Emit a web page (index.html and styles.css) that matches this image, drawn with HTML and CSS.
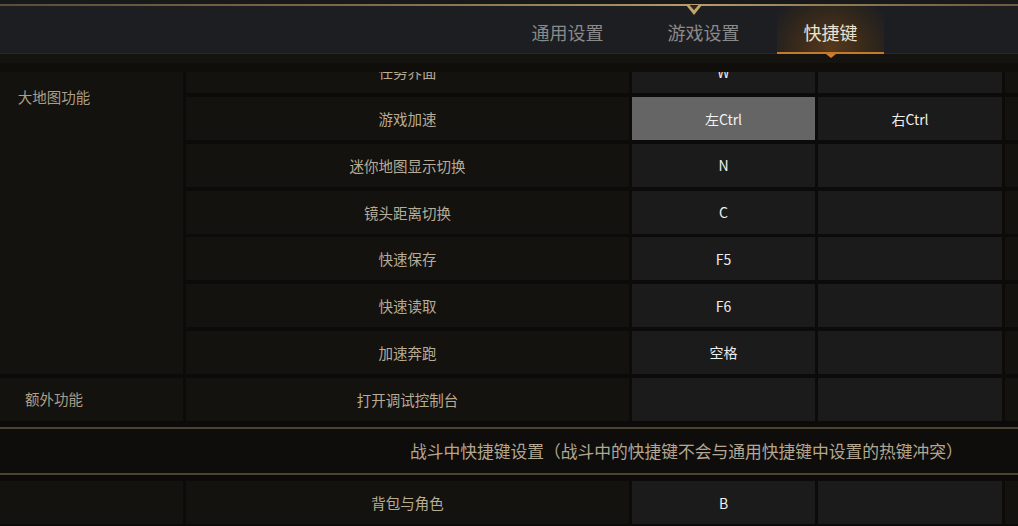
FILE: index.html
```html
<!DOCTYPE html>
<html lang="zh-CN">
<head>
<meta charset="utf-8">
<title>快捷键设置</title>
<link rel="stylesheet" href="styles.css">
</head>
<body>
<div class="top-strip"></div>
<div class="gold-line">
  <svg class="notch" width="16" height="11" viewBox="0 0 16 11">
    <polygon points="0,0 16,0 8,10" fill="#c2a46c"/>
    <polygon points="3.5,0 12.5,0 8,5.2" fill="#2e271d"/>
  </svg>
</div>
<header class="tabs-bar">
  <nav class="tabs">
    <div class="tab">通用设置</div>
    <div class="tab">游戏设置</div>
    <div class="tab active">快捷键</div>
  </nav>
</header>
<div class="sub-band-a"></div>
<div class="sub-band-b"></div>
<main class="viewport">
  <div class="content">
    <section class="group">
      <div class="cat cat-top span-7"><span class="cat-label">大地图功能</span></div>
      <div class="act">任务界面</div><div class="key">W</div><div class="key"></div><div class="extra"></div>
      <div class="act">游戏加速</div><div class="key key-hl">左Ctrl</div><div class="key">右Ctrl</div><div class="extra"></div>
      <div class="act">迷你地图显示切换</div><div class="key">N</div><div class="key"></div><div class="extra"></div>
      <div class="act">镜头距离切换</div><div class="key">C</div><div class="key"></div><div class="extra"></div>
      <div class="act">快速保存</div><div class="key">F5</div><div class="key"></div><div class="extra"></div>
      <div class="act">快速读取</div><div class="key">F6</div><div class="key"></div><div class="extra"></div>
      <div class="act">加速奔跑</div><div class="key">空格</div><div class="key"></div><div class="extra"></div>
    </section>
    <section class="group">
      <div class="cat cat-mid"><span class="cat-label">额外功能</span></div>
      <div class="act">打开调试控制台</div><div class="key"></div><div class="key"></div><div class="extra"></div>
    </section>
    <div class="section-band">战斗中快捷键设置（战斗中的快捷键不会与通用快捷键中设置的热键冲突）</div>
    <section class="group">
      <div class="cat cat-mid"></div>
      <div class="act">背包与角色</div><div class="key">B</div><div class="key"></div><div class="extra"></div>
    </section>
  </div>
</main>
</body>
</html>
```

FILE: styles.css
```css
* { box-sizing: border-box; }

html, body {
  margin: 0;
  padding: 0;
}

body {
  width: 1018px;
  height: 526px;
  overflow: hidden;
  background: #0c0b09;
  font-family: "Noto Sans CJK SC", "Noto Sans", sans-serif;
}

.top-strip {
  height: 4px;
  background: #18191b;
}

.gold-line {
  position: relative;
  height: 2px;
  background: linear-gradient(90deg, #5a4d39 0%, #7d6a4c 35%, #a48a5e 60%, #b89c6b 68%, #917a55 82%, #6a5a42 100%);
  z-index: 2;
}

.notch {
  position: absolute;
  left: 686px;
  top: 1px;
  display: block;
}

.tabs-bar {
  height: 48px;
  background: #1d1e22;
  border-bottom: 1px solid #2b2925;
  display: flex;
  justify-content: flex-end;
  padding-right: 134px;
}

.tabs {
  display: flex;
  gap: 11px;
  height: 100%;
}

.tab {
  position: relative;
  display: flex;
  align-items: center;
  padding: 5px 26.5px 0;
  font-size: 18px;
  color: #8a8a8a;
  line-height: 1;
}

.tab.active {
  color: #ebe2d2;
  background: radial-gradient(ellipse 62% 130% at 50% 90%, #55391d 0%, #3f2d1a 40%, #2a241d 75%, rgba(29, 30, 34, 0) 100%);
}

.tab.active::after {
  content: "";
  position: absolute;
  left: 0;
  right: 0;
  bottom: -1px;
  height: 2px;
  background: #c5792a;
}

.tab.active::before {
  content: "";
  position: absolute;
  left: 50%;
  bottom: -5px;
  margin-left: -5px;
  border-left: 5px solid transparent;
  border-right: 5px solid transparent;
  border-top: 4px solid #d27f28;
  z-index: 3;
}

.sub-band-a {
  height: 9px;
  background: #14130f;
}

.sub-band-b {
  height: 9px;
  background: #0f0e0b;
}

.viewport {
  height: 454px;
  overflow: hidden;
}

.content {
  margin-top: -21.8px;
  display: flex;
  flex-direction: column;
  gap: 3.8px;
}

.group {
  display: grid;
  grid-template-columns: 183px 443px 183px 184px 13px;
  grid-auto-rows: 43px;
  column-gap: 3px;
  row-gap: 3.8px;
}

.cat {
  grid-column: 1;
  background: #13120f;
  display: flex;
}

.span-7 { grid-row: 1 / span 7; }

.cat-top {
  align-items: flex-start;
  padding-top: 36.8px;
}

.cat-mid {
  align-items: center;
}

.cat-label {
  display: block;
  width: 108px;
  text-align: center;
  font-size: 14.5px;
  line-height: 20px;
  color: #ab9f89;
}

.act {
  grid-column: 2;
  background: #13120f;
  display: flex;
  align-items: center;
  justify-content: center;
  font-size: 14.5px;
  color: #b8ac96;
}

.key {
  background: #1b1b1b;
  display: flex;
  align-items: center;
  justify-content: center;
  font-size: 14px;
  color: #eeeeee;
}

.key-hl {
  background: #656565;
  color: #f2f2f2;
}

.extra {
  background: #13120f;
}

.section-band {
  margin: 2.2px 0 2.9px;
  height: 48px;
  border-top: 2px solid #4b4431;
  border-bottom: 2px solid #4b4431;
  background: #0e0d0b;
  display: flex;
  align-items: center;
  justify-content: flex-start;
  padding: 1px 0 0 410px;
  font-size: 16.75px;
  white-space: nowrap;
  color: #b3a791;
}
```
